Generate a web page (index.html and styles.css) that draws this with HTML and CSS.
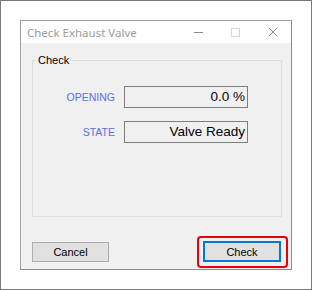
FILE: index.html
```html
<!DOCTYPE html>
<html lang="en">
<head>
    <meta charset="UTF-8">
    <meta name="viewport" content="width=device-width, initial-scale=1.0">
    <title>Check Exhaust Valve</title>
    <link rel="stylesheet" href="styles.css">
</head>
<body>
    <div class="frame">
        <div class="window">
            <div class="titlebar">
                <span class="title">Check Exhaust Valve</span>
                <div class="controls">
                    <span class="ctl"><span class="min"></span></span>
                    <span class="ctl"><span class="max"></span></span>
                    <span class="ctl">
                        <svg width="10" height="10" viewBox="0 0 10 10">
                            <path d="M1 1 L9 9 M9 1 L1 9" stroke="#8a8a8a" stroke-width="1" fill="none"/>
                        </svg>
                    </span>
                </div>
            </div>
            <div class="content">
                <fieldset class="group">
                    <legend>Check</legend>
                    <div class="fields">
                        <label class="lbl">OPENING</label>
                        <div class="value">0.0 %</div>
                        <label class="lbl">STATE</label>
                        <div class="value">Valve Ready</div>
                    </div>
                </fieldset>
                <div class="buttons">
                    <button class="btn cancel">Cancel</button>
                    <div class="focus-wrap">
                        <button class="btn primary">Check</button>
                        <span class="highlight"></span>
                    </div>
                </div>
            </div>
        </div>
    </div>
</body>
</html>
```

FILE: styles.css
```css
*{
    padding: 0;
    margin: 0;
    box-sizing: border-box;
}
body {
    font-family: "Liberation Sans", Arial, sans-serif;
    background: #fff;
}

.frame {
    width: 312px;
    height: 290px;
    border: 1px solid #7a7a7a;
    padding: 19px 0 0 19px;
    background: #fff;
}

.window {
    width: 272px;
    height: 250px;
    border: 1px solid #a0a0a0;
    border-right-color: #8c8c8c;
    border-bottom-color: #8c8c8c;
    display: flex;
    flex-direction: column;
}

.titlebar {
    height: 22px;
    background: #fff;
    display: flex;
    align-items: center;
    padding-left: 6px;
}

.title {
    font-family: "Noto Sans", sans-serif;
    font-size: 11.5px;
    color: #9c9c9c;
    flex: 1;
}

.controls {
    display: flex;
    height: 100%;
}

.ctl {
    width: 37px;
    display: flex;
    align-items: center;
    justify-content: center;
}

.min {
    width: 9px;
    height: 1px;
    background: #8a8a8a;
}

.max {
    width: 9px;
    height: 9px;
    border: 1px solid #d4d4d4;
}

.content {
    flex: 1;
    background: #f0f0f0;
    padding: 0 9px 0 11px;
}

.group {
    border: 1px solid #dcdcdc;
    margin-top: 11px;
    height: 163px;
}

.group legend {
    font-size: 11px;
    color: #000;
    margin-left: 3px;
    padding: 0 1px 0 2px;
}

.fields {
    display: grid;
    grid-template-columns: 82px 124px;
    column-gap: 9px;
    row-gap: 13px;
    align-items: center;
    padding-top: 20px;
}

.lbl {
    font-size: 10.5px;
    color: #5b6fe0;
    text-align: right;
}

.value {
    height: 22px;
    border: 1px solid #7d7d7d;
    background: #f0f0f0;
    font-size: 13.5px;
    color: #000;
    text-align: right;
    padding-right: 2px;
    line-height: 20px;
}

.buttons {
    display: flex;
    justify-content: space-between;
    align-items: flex-start;
    margin-top: 24px;
    padding-right: 1px;
}

.btn {
    font-family: "Liberation Sans", Arial, sans-serif;
    font-size: 11px;
    color: #000;
    background: #e1e1e1;
    border: 1px solid #adadad;
    width: 77px;
    height: 20px;
}

.cancel {
    margin-top: 1px;
}

.focus-wrap {
    position: relative;
}

.primary {
    width: 78px;
    height: 21px;
    border: 2px solid #0078d7;
}

.highlight {
    position: absolute;
    top: -5px;
    left: -6px;
    right: -7px;
    bottom: -6px;
    border: 2px solid #e8000b;
    border-radius: 4px;
}
```
